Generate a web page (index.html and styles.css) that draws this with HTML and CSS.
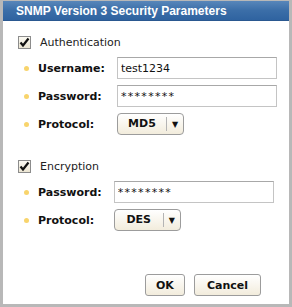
FILE: index.html
```html
<!DOCTYPE html>
<html lang="en">
<head>
<meta charset="UTF-8">
<title>SNMP Version 3 Security Parameters</title>
<link rel="stylesheet" href="styles.css">
</head>
<body>
<div class="dialog">
    <div class="title">SNMP Version 3 Security Parameters</div>
    <div class="content">
        <label class="check">
            <span class="box"><svg width="11" height="11" viewBox="0 0 11 11"><path d="M1.5 5.5 L4 8.5 L9.5 1.5" fill="none" stroke="#111" stroke-width="2.2"/></svg></span>
            Authentication
        </label>
        <div class="fields">
            <span class="label">Username:</span>
            <input class="field" type="text" value="test1234">
            <span class="label">Password:</span>
            <input class="field secret" type="text" value="********">
            <span class="label">Protocol:</span>
            <div class="select"><span class="value">MD5</span><span class="arrow">&#9660;</span></div>
        </div>

        <label class="check second">
            <span class="box"><svg width="11" height="11" viewBox="0 0 11 11"><path d="M1.5 5.5 L4 8.5 L9.5 1.5" fill="none" stroke="#111" stroke-width="2.2"/></svg></span>
            Encryption
        </label>
        <div class="fields">
            <span class="label">Password:</span>
            <input class="field secret" type="text" value="********">
            <span class="label">Protocol:</span>
            <div class="select"><span class="value">DES</span><span class="arrow">&#9660;</span></div>
        </div>

        <div class="actions">
            <button class="btn ok">OK</button>
            <button class="btn">Cancel</button>
        </div>
    </div>
</div>
</body>
</html>
```

FILE: styles.css
```css
body {
    margin: 0;
    background: #fff;
}
.dialog {
    width: 292px;
    height: 307px;
    box-sizing: border-box;
    border: 3px solid #b8b8b8;
    border-top: 1px solid #b8b8b8;
    display: flex;
    flex-direction: column;
    font-family: "DejaVu Sans", Verdana, sans-serif;
    font-size: 11px;
    color: #222;
}
.title {
    height: 20px;
    line-height: 21px;
    padding-left: 13px;
    background: linear-gradient(#5886ba, #3b6ea8 50%, #2f63a0);
    border-bottom: 1px solid #2a5890;
    box-sizing: border-box;
    color: #fff;
    font-family: "Liberation Sans", Arial, sans-serif;
    font-weight: bold;
    font-size: 12px;
}
.content {
    flex: 1;
    display: flex;
    flex-direction: column;
    padding: 15px 28px 8px 15px;
}
.check {
    display: flex;
    align-items: center;
    gap: 9px;
    height: 13px;
    color: #222;
}
.check.second {
    margin-top: 25px;
}
.box {
    width: 11px;
    height: 11px;
    border: 1px solid #8c8c8c;
    background: linear-gradient(#fbf9f2, #ebe5d2);
    display: flex;
}
.fields {
    display: grid;
    grid-template-columns: auto 160px;
    grid-auto-rows: 22px;
    column-gap: 12px;
    row-gap: 6px;
    align-items: center;
    margin-top: 8px;
    padding-left: 6px;
}
.label {
    display: flex;
    align-items: center;
    gap: 9px;
    font-weight: bold;
    color: #111;
}
.label::before {
    content: "";
    width: 5px;
    height: 5px;
    border-radius: 50%;
    background: #f8d46c;
}
.field {
    height: 22px;
    box-sizing: border-box;
    border: 1px solid #c4c4c4;
    border-top-color: #a8a8a8;
    padding: 0 3px;
    font-family: "DejaVu Sans", Verdana, sans-serif;
    font-size: 11px;
    color: #111;
    outline: none;
}
.secret {
    letter-spacing: 1.3px;
}
.select {
    width: 67px;
    height: 22px;
    box-sizing: border-box;
    border: 1px solid #9c9c9c;
    border-radius: 4px;
    background: linear-gradient(#ffffff, #f2ecdc);
    display: flex;
    align-items: center;
    font-weight: bold;
    color: #111;
}
.value {
    width: 48px;
    text-align: center;
    border-right: 1px solid #b4b4b4;
    line-height: 14px;
}
.arrow {
    flex: 1;
    text-align: center;
    font-size: 8px;
}
.actions {
    margin-top: auto;
    display: flex;
    justify-content: flex-end;
    gap: 9px;
}
.btn {
    height: 22px;
    box-sizing: border-box;
    border: 1px solid #9c9c9c;
    border-radius: 3px;
    background: linear-gradient(#ffffff, #f2ecdc);
    font-family: "DejaVu Sans", Verdana, sans-serif;
    font-size: 11px;
    font-weight: bold;
    color: #111;
    padding: 0 12px;
}
.btn.ok {
    width: 40px;
    padding: 0;
}
```
